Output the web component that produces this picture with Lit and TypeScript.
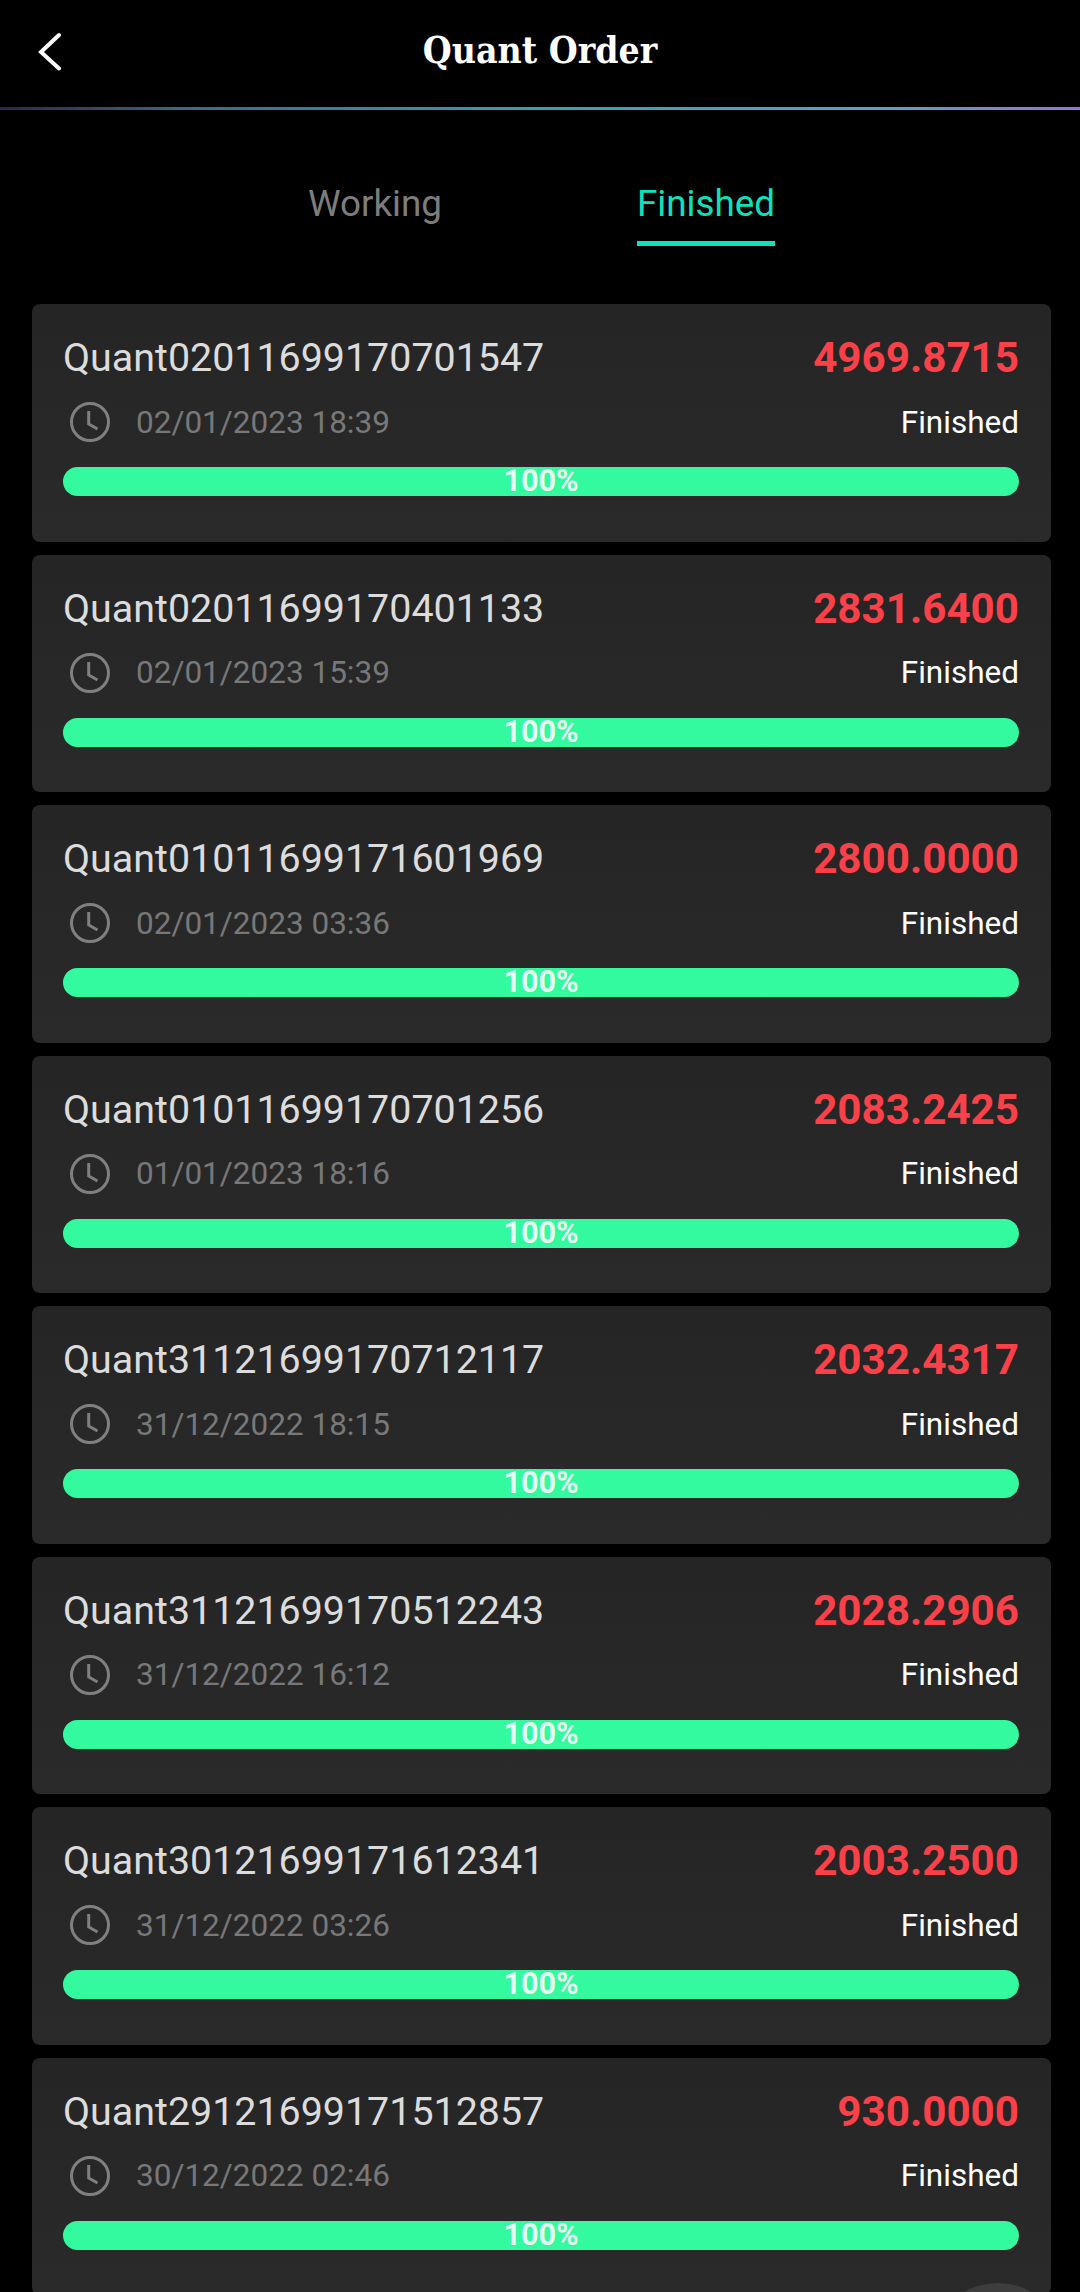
import { LitElement, html, css, svg } from "lit";
import { customElement } from "lit/decorators.js";

const ORDERS = [
  ["Quant02011699170701547", "4969.8715", "02/01/2023 18:39"],
  ["Quant02011699170401133", "2831.6400", "02/01/2023 15:39"],
  ["Quant01011699171601969", "2800.0000", "02/01/2023 03:36"],
  ["Quant01011699170701256", "2083.2425", "01/01/2023 18:16"],
  ["Quant31121699170712117", "2032.4317", "31/12/2022 18:15"],
  ["Quant31121699170512243", "2028.2906", "31/12/2022 16:12"],
  ["Quant30121699171612341", "2003.2500", "31/12/2022 03:26"],
  ["Quant29121699171512857", "930.0000", "30/12/2022 02:46"],
];

@customElement("app-root")
export class AppRoot extends LitElement {
  static styles = css`
    :host {
      display: block;
      position: relative;
      width: 1080px;
      height: 2292px;
      overflow: hidden;
      background: #000;
      font-family: Roboto, "Liberation Sans", sans-serif;
    }
    .header {
      height: 107px;
      position: relative;
      display: flex;
      align-items: center;
      justify-content: center;
    }
    .back {
      position: absolute;
      left: 38px;
      top: 31px;
      width: 24px;
      height: 40px;
    }
    .title {
      font-family: "DejaVu Serif Condensed", "DejaVu Serif", serif;
      font-weight: 700;
      font-size: 37px;
      color: #fff;
      line-height: 40px;
      margin-top: -8px;
    }
    .rule {
      height: 3px;
      background: linear-gradient(90deg, #2d2650 0%, #3d6c85 18%, #3aa0ac 50%, #5aa3c0 81%, #9075d8 100%);
    }
    .tabs {
      height: 128px;
      display: flex;
      justify-content: center;
      gap: 195px;
      box-sizing: border-box;
      padding: 72px 0 0 3px;
    }
    .tab {
      font-size: 36.8px;
      line-height: 44px;
      color: #7d7d7d;
      height: 64px;
      box-sizing: border-box;
    }
    .tab.on {
      color: #10e0bb;
      border-bottom: 5px solid #10e0bb;
    }
    .list {
      padding: 66px 29px 0 32px;
      display: flex;
      flex-direction: column;
      gap: 13px;
    }
    .card {
      height: 237.500px;
      flex: none;
      box-sizing: border-box;
      background: linear-gradient(180deg, #252525, #2a2a2a);
      border-radius: 8px;
      padding: 32px 32px 0 31px;
    }
    .row {
      display: flex;
      justify-content: space-between;
      align-items: center;
    }
    .id {
      font-size: 39.4px;
      line-height: 44px;
      color: #dcdcdc;
    }
    .amount {
      font-size: 42.2px;
      line-height: 44px;
      font-weight: 700;
      color: #fa4149;
    }
    .row2 {
      margin-top: 20px;
      height: 44px;
    }
    .when {
      display: flex;
      align-items: center;
      gap: 25.500px;
      padding-left: 5.500px;
      font-size: 31.5px;
      color: #787878;
    }
    .clock {
      width: 42px;
      height: 42px;
      flex: none;
    }
    .state {
      font-size: 31.5px;
      color: #fff;
    }
    .bar {
      margin-top: 23px;
      height: 29px;
      border-radius: 15px;
      background: #33fa9f;
      text-align: center;
      font-size: 30.5px;
      font-weight: 700;
      line-height: 28px;
      color: #e6fff3;
    }
    .float {
      position: absolute;
      left: 945px;
      top: 2283px;
      width: 106px;
      height: 80px;
      border-radius: 50%;
      background: #3d3d3d;
    }
  `;

  private clock() {
    return html`<svg class="clock" viewBox="0 0 42 42" fill="none" stroke="#808080">
      ${svg`<circle cx="21" cy="21" r="18.5" stroke-width="3"/>
      <path d="M19.700 10V23L28.500 28" stroke-width="3"/>`}
    </svg>`;
  }

  render() {
    return html`
      <div class="header">
        <svg class="back" viewBox="0 0 24 40" fill="none" stroke="#fff" stroke-width="4" stroke-linecap="round">
          <path d="M21 4 3 21 21 37.500" />
        </svg>
        <div class="title">Quant Order</div>
      </div>
      <div class="rule"></div>
      <div class="tabs">
        <div class="tab">Working</div>
        <div class="tab on">Finished</div>
      </div>
      <div class="list">
        ${ORDERS.map(
          ([id, amount, when]) => html`
            <div class="card">
              <div class="row">
                <div class="id">${id}</div>
                <div class="amount">${amount}</div>
              </div>
              <div class="row row2">
                <div class="when">${this.clock()}<span>${when}</span></div>
                <div class="state">Finished</div>
              </div>
              <div class="bar">100%</div>
            </div>
          `
        )}
      </div>
      <div class="float"></div>
    `;
  }
}
